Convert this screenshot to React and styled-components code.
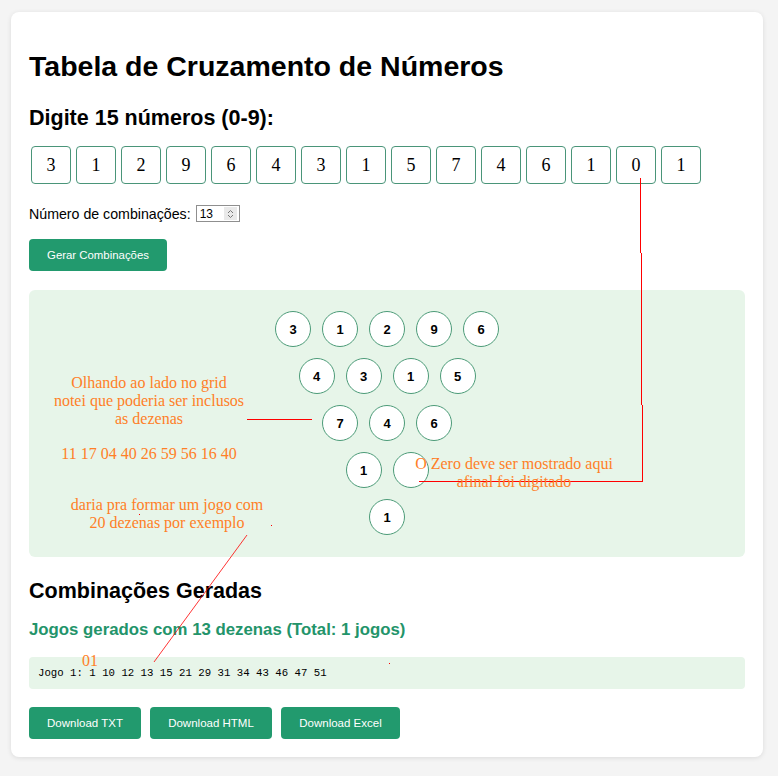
import React from "react";
import styled, { createGlobalStyle } from "styled-components";

const digits = [3, 1, 2, 9, 6, 4, 3, 1, 5, 7, 4, 6, 1, 0, 1];

// pyramid rows as shown in the grid (the zero slot is left empty)
const pyramid = [
  ["3", "1", "2", "9", "6"],
  ["4", "3", "1", "5"],
  ["7", "4", "6"],
  ["1", ""],
  ["1"],
];

const downloads = [
  { label: "Download TXT", width: 112 },
  { label: "Download HTML", width: 122 },
  { label: "Download Excel", width: 119 },
];

const GlobalStyle = createGlobalStyle`
  body {
    margin: 0;
    background: #f4f4f4;
    font-family: "Liberation Sans", Arial, sans-serif;
    color: #000;
  }
`;

const Page = styled.div`
  position: relative;
  width: 778px;
  min-height: 776px;
  padding: 12px 0 0 11px;
  box-sizing: border-box;
`;

const Card = styled.div`
  width: 752px;
  box-sizing: border-box;
  background: #fff;
  border-radius: 8px;
  box-shadow: 0 1px 5px rgba(0, 0, 0, 0.1);
  padding: 38px 18px 18px;
  display: flex;
  flex-direction: column;
`;

const Title = styled.h1`
  margin: 0;
  font-size: 28.5px;
  font-weight: bold;
  line-height: 33px;
`;

const SubTitle = styled.h2`
  margin: ${(p) => p.$top || 0}px 0 0;
  font-size: 21.5px;
  font-weight: bold;
  line-height: 25px;
`;

const DigitRow = styled.div`
  display: flex;
  gap: 5px;
  margin: 15px 0 0 2px;
`;

const DigitBox = styled.div`
  width: 40px;
  height: 38px;
  box-sizing: border-box;
  border: 1px solid #4a9579;
  border-radius: 4px;
  display: flex;
  align-items: center;
  justify-content: center;
  font-family: "Liberation Serif", "Times New Roman", serif;
  font-size: 18px;
`;

const CountRow = styled.div`
  display: flex;
  align-items: center;
  gap: 5px;
  margin-top: 21px;
  font-size: 14.2px;
  height: 17px;
`;

const NumberBox = styled.div`
  width: 44px;
  height: 17px;
  box-sizing: border-box;
  border: 1px solid #8f8f8f;
  display: flex;
  align-items: center;
  justify-content: space-between;
  padding: 0 2px 0 3px;
  font-size: 12px;
  background: #fff;
`;

const Spinner = styled.span`
  width: 13px;
  height: 13px;
  background: #e9e9e9;
  display: flex;
  align-items: center;
  justify-content: center;
`;

const Button = styled.button`
  background: #229a6e;
  color: #fff;
  border: none;
  border-radius: 4px;
  height: 32px;
  width: ${(p) => p.$w}px;
  padding: 0;
  font-family: "Liberation Sans", Arial, sans-serif;
  font-size: 11.5px;
  cursor: pointer;
`;

const GerarButton = styled(Button)`
  align-self: flex-start;
  margin-top: 17px;
  font-size: 11.4px;
`;

const GridPanel = styled.div`
  margin-top: 19px;
  background: #e7f5e9;
  border-radius: 6px;
  padding: 21px 20px 22px;
  display: flex;
  flex-direction: column;
  align-items: center;
  gap: 11px;
`;

const PyrRow = styled.div`
  display: flex;
  gap: 11px;
`;

const Ball = styled.div`
  width: 36px;
  height: 36px;
  box-sizing: border-box;
  border-radius: 50%;
  border: 1px solid #4c9b78;
  background: #fff;
  display: flex;
  align-items: center;
  justify-content: center;
  font-weight: bold;
  font-size: 13px;
`;

const GreenHeading = styled.h3`
  margin: 16px 0 0;
  color: #23946a;
  font-size: 16.8px;
  font-weight: bold;
  line-height: 20px;
`;

const Result = styled.div`
  margin-top: 17px;
  height: 32px;
  background: #e7f5e9;
  border-radius: 4px;
  padding: 0 9px;
  display: flex;
  align-items: center;
  font-family: "Liberation Mono", "Courier New", monospace;
  font-size: 10.7px;
`;

const Downloads = styled.div`
  display: flex;
  gap: 9px;
  margin-top: 18px;
`;

/* annotations drawn over the screenshot */
const Overlay = styled.svg`
  position: absolute;
  left: 0;
  top: 0;
  pointer-events: none;
`;

const Note = styled.div`
  position: absolute;
  left: ${(p) => p.$x}px;
  top: ${(p) => p.$y}px;
  width: ${(p) => p.$w}px;
  text-align: center;
  font-family: "Liberation Serif", "Times New Roman", serif;
  font-size: 16px;
  line-height: ${(p) => p.$lh || 18}px;
  color: #ff7f27;
  pointer-events: none;
  white-space: nowrap;
`;

export default function App() {
  return (
    <Page>
      <GlobalStyle />
      <Card>
        <Title>Tabela de Cruzamento de Números</Title>
        <SubTitle $top={23}>Digite 15 números (0-9):</SubTitle>
        <DigitRow>
          {digits.map((d, i) => (
            <DigitBox key={i}>{d}</DigitBox>
          ))}
        </DigitRow>
        <CountRow>
          <span>Número de combinações:</span>
          <NumberBox>
            13
            <Spinner>
              <svg width="7" height="10" viewBox="0 0 7 10">
                <path d="M1 4 L3.5 1.5 L6 4 M1 6 L3.5 8.5 L6 6" fill="none" stroke="#777" strokeWidth="1" />
              </svg>
            </Spinner>
          </NumberBox>
        </CountRow>
        <GerarButton $w={138}>Gerar Combinações</GerarButton>
        <GridPanel>
          {pyramid.map((row, r) => (
            <PyrRow key={r}>
              {row.map((n, i) => (
                <Ball key={i}>{n}</Ball>
              ))}
            </PyrRow>
          ))}
        </GridPanel>
        <SubTitle $top={22}>Combinações Geradas</SubTitle>
        <GreenHeading>Jogos gerados com 13 dezenas (Total: 1 jogos)</GreenHeading>
        <Result>Jogo 1: 1 10 12 13 15 21 29 31 34 43 46 47 51</Result>
        <Downloads>
          {downloads.map((d) => (
            <Button key={d.label} $w={d.width}>
              {d.label}
            </Button>
          ))}
        </Downloads>
      </Card>

      <Overlay width="778" height="776" viewBox="0 0 778 776">
        <g fill="#ff0000">
          <rect x="640" y="178" width="1" height="75" />
          <rect x="641" y="253" width="1" height="152" />
          <rect x="642" y="405" width="1" height="77" />
          <rect x="419" y="481" width="224" height="1" />
          <rect x="247" y="419" width="65" height="1" />
          <rect x="139" y="514" width="1" height="1" />
          <rect x="271" y="525" width="1" height="1" />
          <rect x="389" y="663" width="1" height="1" />
        </g>
        <path d="M247 535 L154 662" stroke="#ff0000" strokeWidth="0.8" fill="none" />
      </Overlay>
      <Note $x={49} $y={374} $w={200}>
        Olhando ao lado no grid
        <br />
        notei que poderia ser inclusos
        <br />
        as dezenas
      </Note>
      <Note $x={49} $y={445} $w={200}>
        11 17 04 40 26 59 56 16 40
      </Note>
      <Note $x={67} $y={496} $w={200}>
        daria pra formar um jogo com
        <br />
        20 dezenas por exemplo
      </Note>
      <Note $x={414} $y={455} $w={200}>
        O Zero deve ser mostrado aqui
        <br />
        afinal foi digitado
      </Note>
      <Note $x={80} $y={654} $w={20} $lh={14}>
        01
      </Note>
    </Page>
  );
}
